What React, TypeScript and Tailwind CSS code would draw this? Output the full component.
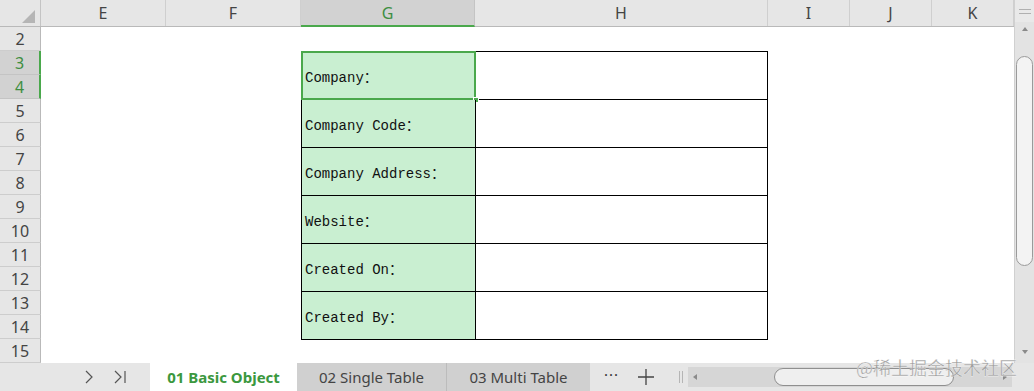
import React from "react";

const cols = [
  { name: "E", w: "w-[125px]" },
  { name: "F", w: "w-[135px]" },
  { name: "G", w: "w-[174px]", active: true },
  { name: "H", w: "w-[293px]" },
  { name: "I", w: "w-[82px]" },
  { name: "J", w: "w-[82px]" },
  { name: "K", w: "w-[82px]" },
];

const rows = [2, 3, 4, 5, 6, 7, 8, 9, 10, 11, 12, 13, 14, 15];

const labels = [
  "Company：",
  "Company Code：",
  "Company Address：",
  "Website：",
  "Created On：",
  "Created By：",
];

const uiFont = { fontFamily: '"Noto Sans", "Open Sans", sans-serif' };
const cellFont = { fontFamily: '"Liberation Mono", "Noto Sans CJK SC", monospace' };

function ColumnHeader() {
  return (
    <div className="flex h-[27px] bg-[#e6e6e6] border-b border-[#b9b9b9]" style={uiFont}>
      <div className="w-[41px] shrink-0 border-r border-[#c4c4c4] relative">
        <div className="absolute right-[5px] bottom-[3px] w-0 h-0 border-l-[13px] border-l-transparent border-b-[13px] border-b-[#b5b5b5]" />
      </div>
      {cols.map((c) => (
        <div
          key={c.name}
          className={
            c.active
              ? `${c.w} shrink-0 flex items-center justify-center bg-[#d2d2d2] text-[#3e8e41] text-[16px] border-r border-[#c4c4c4] border-b-2 border-b-[#4aa84c] -mb-px`
              : `${c.w} shrink-0 flex items-center justify-center text-[#444] text-[16px] border-r border-[#cfcfcf]`
          }
        >
          {c.name}
        </div>
      ))}
    </div>
  );
}

function RowHeaders() {
  return (
    <div className="w-[41px] shrink-0 flex flex-col bg-[#e6e6e6]" style={uiFont}>
      {rows.map((r) => {
        const sel = r === 3 || r === 4;
        return (
          <div
            key={r}
            className={
              sel
                ? "h-[24px] flex items-center justify-center text-[16px] text-[#3e8e41] bg-[#d2d2d2] border-b border-[#c4c4c4] border-r-2 border-r-[#4aa84c]"
                : "h-[24px] flex items-center justify-center text-[16px] text-[#444] border-b border-[#cdcdcd] border-r border-r-[#b9b9b9]"
            }
          >
            {r}
          </div>
        );
      })}
    </div>
  );
}

function InfoTable() {
  return (
    <div className="w-[467px] border-l border-t border-black" style={cellFont}>
      {labels.map((l, i) => (
        <div key={l} className="flex h-[48px]">
          <div className="relative w-[174px] shrink-0 bg-[#c9efd1] border-r border-b border-black flex items-center pl-[3px] pt-[5px] text-[14px] text-[#111]">
            {l}
            {i === 0 && (
              <>
                <div className="absolute -left-px -top-px -right-px -bottom-px border-2 border-[#4aa84c]" />
                <div className="absolute -right-[4px] -bottom-[4px] w-[6px] h-[6px] bg-[#4aa84c] border border-white" />
              </>
            )}
          </div>
          <div className="flex-1 bg-white border-r border-b border-black" />
        </div>
      ))}
    </div>
  );
}

function VScroll() {
  return (
    <div className="w-[20px] shrink-0 flex flex-col bg-[#e3e3e3] border-l border-[#d0d0d0]">
      <div className="h-[22px] flex flex-col items-center justify-center gap-[3px] bg-[#e9e9e9]">
        <div className="w-[12px] h-px bg-[#b0b0b0]" />
        <div className="w-[12px] h-px bg-[#b0b0b0]" />
      </div>
      <div className="h-[14px] flex items-center justify-center">
        <div className="w-0 h-0 border-l-[3px] border-l-transparent border-r-[3px] border-r-transparent border-b-[4px] border-b-[#8a8a8a]" />
      </div>
      <div className="flex-1 flex flex-col px-[1px] pt-[20px]">
        <div className="h-[210px] rounded-full border border-[#9a9a9a] bg-[#f3f3f3]" />
        <div className="flex-1" />
        <div className="h-[14px] flex items-center justify-center mb-[4px]">
          <div className="w-0 h-0 border-l-[3px] border-l-transparent border-r-[3px] border-r-transparent border-t-[4px] border-t-[#8a8a8a]" />
        </div>
      </div>
    </div>
  );
}

function TabBar() {
  return (
    <div className="h-[28px] flex items-stretch bg-[#e6e6e6] text-[15px]" style={uiFont}>
      <div className="w-[150px] shrink-0 flex items-center pl-[82px] gap-[16px] text-[#555]">
        <svg width="14" height="16" viewBox="0 0 14 16" fill="none" stroke="#555" strokeWidth="1.2">
          <path d="M4 2l6 6-6 6" />
        </svg>
        <svg width="16" height="16" viewBox="0 0 16 16" fill="none" stroke="#555" strokeWidth="1.2">
          <path d="M3 2l6 6-6 6M13 2v12" />
        </svg>
      </div>
      <div className="w-[147px] shrink-0 flex items-center justify-center bg-white font-bold text-[#3b983e]">
        01 Basic Object
      </div>
      <div className="w-[150px] shrink-0 flex items-center justify-center bg-[#d0d0d0] text-[#444] border-r border-[#bcbcbc]">
        02 Single Table
      </div>
      <div className="w-[143px] shrink-0 flex items-center justify-center bg-[#d0d0d0] text-[#444]">
        03 Multi Table
      </div>
      <div className="w-[84px] shrink-0 flex items-center pl-[14px] gap-[18px] text-[#333]">
        <span className="tracking-[1px] -mt-[6px]">···</span>
        <svg width="18" height="18" viewBox="0 0 18 18" stroke="#444" strokeWidth="1.3">
          <path d="M9 1v16M1 9h16" />
        </svg>
      </div>
      <div className="w-[14px] shrink-0 flex items-center justify-center gap-[2px]">
        <div className="w-px h-[12px] bg-[#b5b5b5]" />
        <div className="w-px h-[12px] bg-[#b5b5b5]" />
      </div>
      <div className="flex-1 flex items-center py-[4px] pr-[22px]">
        <div className="flex-1 h-full flex items-center bg-[#d6d6d6]">
          <div className="w-[14px] flex items-center justify-center">
            <div className="w-0 h-0 border-t-[3px] border-t-transparent border-b-[3px] border-b-transparent border-r-[4px] border-r-[#8a8a8a]" />
          </div>
          <div className="w-[72px]" />
          <div className="w-[180px] h-[18px] rounded-full border border-[#8f8f8f] bg-[#efefef]" />
          <div className="flex-1" />
          <div className="w-[14px] flex items-center justify-center">
            <div className="w-0 h-0 border-t-[3px] border-t-transparent border-b-[3px] border-b-transparent border-l-[4px] border-l-[#8a8a8a]" />
          </div>
        </div>
      </div>
    </div>
  );
}

export default function App() {
  return (
    <div className="relative w-[1034px] h-[391px] flex flex-col bg-white overflow-hidden">
      <div className="flex h-[363px]">
        <div className="w-[1014px] flex flex-col">
          <ColumnHeader />
          <div className="flex flex-1">
            <RowHeaders />
            <div className="flex-1 flex flex-col">
              <div className="h-[24px]" />
              <div className="pl-[260px]">
                <InfoTable />
              </div>
            </div>
          </div>
        </div>
        <VScroll />
      </div>
      <TabBar />

      {/* watermark */}
      <div
        className="absolute left-[856px] top-[354px] text-[18px] text-[#9a9a9a] whitespace-nowrap"
        style={{
          fontFamily: '"Noto Sans CJK SC", "Noto Sans", sans-serif',
          WebkitTextStroke: "0.3px #fff",
        }}
      >
        @稀土掘金技术社区
      </div>
    </div>
  );
}
